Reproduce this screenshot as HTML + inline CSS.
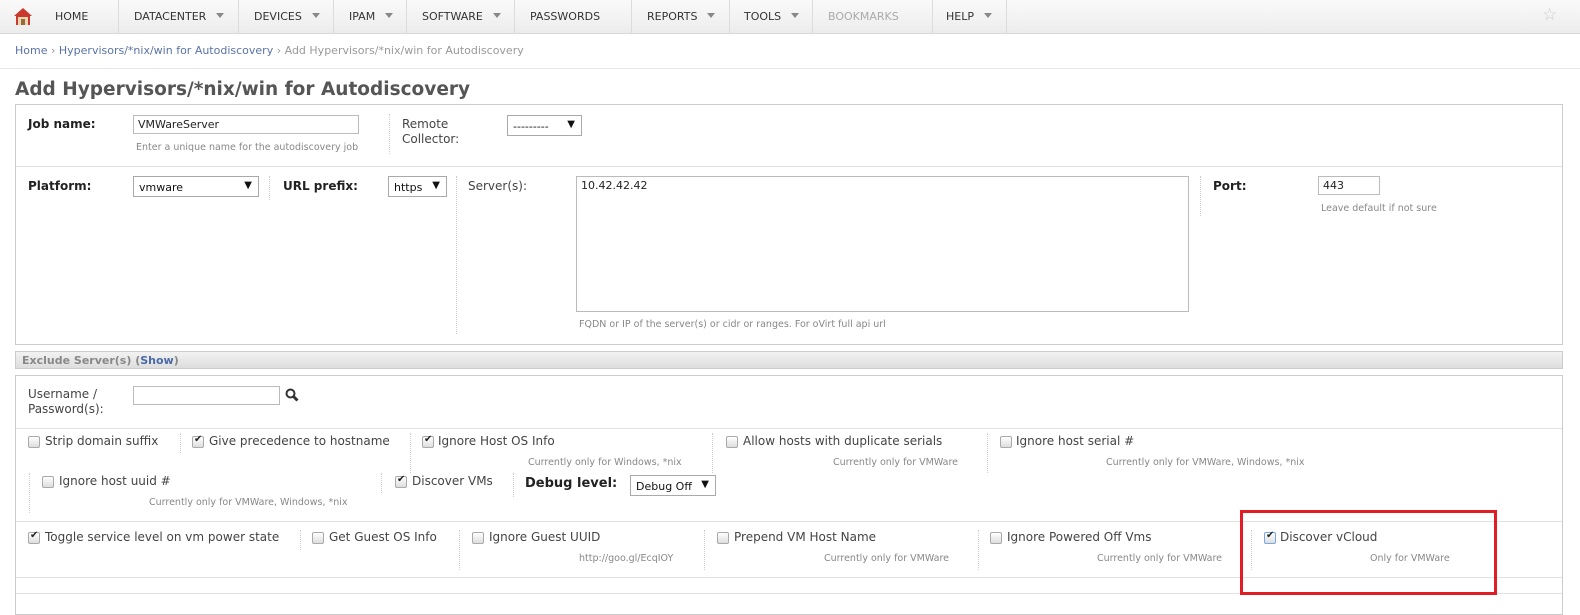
<!DOCTYPE html>
<html><head><meta charset="utf-8"><style>
*{margin:0;padding:0;box-sizing:border-box}
body{width:1580px;height:609px;overflow:hidden;background:#fff;font-family:"DejaVu Sans","Liberation Sans",sans-serif;font-size:12px;color:#444;position:relative}
.a{position:absolute;white-space:nowrap}
.nav{position:absolute;left:0;top:0;width:1580px;height:34px;background:linear-gradient(#fafafa,#ececec);border-bottom:1px solid #d8d8d8}
.ni{position:absolute;top:10px;font-size:11px;color:#333}
.sep{position:absolute;top:0;width:1px;height:34px;background:#dcdcdc}
.car{display:inline-block;margin-left:10px;border-left:4px solid transparent;border-right:4px solid transparent;border-top:5px solid #888;vertical-align:2px}
.box{position:absolute;border:1px solid #ccc}
.hl{position:absolute;height:1px;background:#e2e2e2}
.vd{position:absolute;width:0;border-left:1px dotted #ccc}
.in{position:absolute;border:1px solid #bbb;background:#fff;height:19px;font-size:11px;padding:2px 4px;color:#222}
.sel{position:absolute;border:1px solid #aaa;background:#fff;height:21px;font-size:11px;padding:4px 5px;color:#111}
.sel b{position:absolute;right:6px;top:3px;font-size:10px}
.lb{font-weight:bold;color:#222;font-size:12px}
.sm{font-size:9.5px;color:#888}
.cb{position:absolute;width:12px;height:12px;border:1px solid #aaa;border-radius:2px;background:linear-gradient(#fff,#ddd)}
.cb.c::after{content:"✔";position:absolute;left:1px;top:-3px;font-size:10px;color:#222}
.t{font-size:12px;color:#444}
</style></head><body>
<div class="nav">
<svg style="position:absolute;left:13px;top:7px" width="20" height="19" viewBox="0 0 20 19"><path d="M10 1 L1 9 L3 9 L3 18 L17 18 L17 9 L19 9 Z" fill="#c8382c"/><rect x="5" y="10" width="10" height="8" fill="#e9d6b2"/><rect x="8" y="12" width="4" height="6" fill="#9a6b3a"/></svg>
<div class="ni" style="left:55px">HOME</div>
<div class="sep" style="left:118px"></div>
<div class="ni" style="left:134px">DATACENTER<span class="car"></span></div>
<div class="sep" style="left:238px"></div>
<div class="ni" style="left:254px">DEVICES<span class="car"></span></div>
<div class="sep" style="left:333px"></div>
<div class="ni" style="left:349px">IPAM<span class="car"></span></div>
<div class="sep" style="left:406px"></div>
<div class="ni" style="left:422px">SOFTWARE<span class="car"></span></div>
<div class="sep" style="left:514px"></div>
<div class="ni" style="left:530px">PASSWORDS</div>
<div class="sep" style="left:631px"></div>
<div class="ni" style="left:647px">REPORTS<span class="car"></span></div>
<div class="sep" style="left:729px"></div>
<div class="ni" style="left:744px">TOOLS<span class="car"></span></div>
<div class="sep" style="left:812px"></div>
<div class="ni" style="left:828px;color:#aaa">BOOKMARKS</div>
<div class="sep" style="left:932px"></div>
<div class="ni" style="left:946px">HELP<span class="car"></span></div>
<div class="sep" style="left:1006px"></div>
<div class="a" style="left:1542px;top:5px;font-size:17px;color:#ccc">☆</div>
</div>
<div class="a" style="left:15px;top:44px;font-size:11px;color:#5a73a8">Home <span style="color:#999">›</span> Hypervisors/*nix/win for Autodiscovery <span style="color:#999">› Add Hypervisors/*nix/win for Autodiscovery</span></div>
<div class="hl" style="left:0;top:68px;width:1580px;background:#e6e6e6"></div>
<div class="a" style="left:15px;top:79px;font-size:18.5px;font-weight:bold;color:#555">Add Hypervisors/*nix/win for Autodiscovery</div>

<div class="box" style="left:15px;top:104px;width:1548px;height:241px"></div>
<div class="a lb" style="left:28px;top:117px">Job name:</div>
<div class="in" style="left:133px;top:115px;width:226px">VMWareServer</div>
<div class="a sm" style="left:136px;top:142px">Enter a unique name for the autodiscovery job</div>
<div class="vd" style="left:389px;top:114px;height:40px"></div>
<div class="a t" style="left:402px;top:117px;line-height:15px">Remote<br>Collector:</div>
<div class="sel" style="left:507px;top:115px;width:75px">---------<b>▼</b></div>
<div class="hl" style="left:16px;top:166px;width:1546px"></div>
<div class="a lb" style="left:28px;top:179px">Platform:</div>
<div class="sel" style="left:133px;top:176px;width:126px">vmware<b>▼</b></div>
<div class="vd" style="left:269px;top:176px;height:24px"></div>
<div class="a lb" style="left:283px;top:179px">URL prefix:</div>
<div class="sel" style="left:388px;top:176px;width:59px">https<b>▼</b></div>
<div class="vd" style="left:456px;top:176px;height:158px"></div>
<div class="a t" style="left:468px;top:179px">Server(s):</div>
<div class="in" style="left:576px;top:176px;width:613px;height:136px">10.42.42.42</div>
<div class="a sm" style="left:579px;top:319px">FQDN or IP of the server(s) or cidr or ranges. For oVirt full api url</div>
<div class="vd" style="left:1200px;top:176px;height:40px"></div>
<div class="a lb" style="left:1213px;top:179px">Port:</div>
<div class="in" style="left:1318px;top:176px;width:62px">443</div>
<div class="a sm" style="left:1321px;top:203px">Leave default if not sure</div>

<div class="a" style="left:15px;top:351px;width:1548px;height:18px;background:linear-gradient(#f2f2f2,#dedede);border:1px solid #ccc;font-size:11px;font-weight:bold;color:#888;padding:2px 6px">Exclude Server(s) (<span style="color:#4a6aa8">Show</span>)</div>

<div class="box" style="left:15px;top:375px;width:1548px;height:240px"></div>
<div class="a t" style="left:28px;top:387px;line-height:15px">Username /<br>Password(s):</div>
<div class="in" style="left:133px;top:386px;width:147px"></div>
<svg class="a" style="left:285px;top:388px" width="14" height="14" viewBox="0 0 14 14"><circle cx="5.5" cy="5.5" r="4" fill="none" stroke="#333" stroke-width="2"/><path d="M8.5 8.5 L12.5 12.5" stroke="#333" stroke-width="3"/></svg>
<div class="hl" style="left:16px;top:428px;width:1546px"></div>

<div class="cb" style="left:28px;top:436px"></div><div class="a t" style="left:45px;top:434px">Strip domain suffix</div>
<div class="vd" style="left:180px;top:433px;height:20px"></div>
<div class="cb c" style="left:192px;top:436px"></div><div class="a t" style="left:209px;top:434px">Give precedence to hostname</div>
<div class="vd" style="left:410px;top:433px;height:40px"></div>
<div class="cb c" style="left:422px;top:436px"></div><div class="a t" style="left:438px;top:434px">Ignore Host OS Info</div>
<div class="a sm" style="left:528px;top:457px">Currently only for Windows, *nix</div>
<div class="vd" style="left:712px;top:433px;height:40px"></div>
<div class="cb" style="left:726px;top:436px"></div><div class="a t" style="left:743px;top:434px">Allow hosts with duplicate serials</div>
<div class="a sm" style="left:833px;top:457px">Currently only for VMWare</div>
<div class="vd" style="left:987px;top:433px;height:40px"></div>
<div class="cb" style="left:1000px;top:436px"></div><div class="a t" style="left:1016px;top:434px">Ignore host serial #</div>
<div class="a sm" style="left:1106px;top:457px">Currently only for VMWare, Windows, *nix</div>

<div class="vd" style="left:29px;top:473px;height:40px"></div>
<div class="cb" style="left:42px;top:476px"></div><div class="a t" style="left:59px;top:474px">Ignore host uuid #</div>
<div class="a sm" style="left:149px;top:497px">Currently only for VMWare, Windows, *nix</div>
<div class="vd" style="left:381px;top:473px;height:20px"></div>
<div class="cb c" style="left:395px;top:476px"></div><div class="a t" style="left:412px;top:474px">Discover VMs</div>
<div class="vd" style="left:513px;top:473px;height:24px"></div>
<div class="a lb" style="left:525px;top:476px;font-size:13px">Debug level:</div>
<div class="sel" style="left:630px;top:475px;width:86px">Debug Off<b>▼</b></div>
<div class="hl" style="left:16px;top:521px;width:1546px"></div>

<div class="cb c" style="left:28px;top:532px"></div><div class="a t" style="left:45px;top:530px">Toggle service level on vm power state</div>
<div class="vd" style="left:300px;top:530px;height:20px"></div>
<div class="cb" style="left:312px;top:532px"></div><div class="a t" style="left:329px;top:530px">Get Guest OS Info</div>
<div class="vd" style="left:459px;top:530px;height:40px"></div>
<div class="cb" style="left:472px;top:532px"></div><div class="a t" style="left:489px;top:530px">Ignore Guest UUID</div>
<div class="a sm" style="left:579px;top:553px">http://goo.gl/EcqIOY</div>
<div class="vd" style="left:704px;top:530px;height:40px"></div>
<div class="cb" style="left:717px;top:532px"></div><div class="a t" style="left:734px;top:530px">Prepend VM Host Name</div>
<div class="a sm" style="left:824px;top:553px">Currently only for VMWare</div>
<div class="vd" style="left:978px;top:530px;height:40px"></div>
<div class="cb" style="left:990px;top:532px"></div><div class="a t" style="left:1007px;top:530px">Ignore Powered Off Vms</div>
<div class="a sm" style="left:1097px;top:553px">Currently only for VMWare</div>
<div class="vd" style="left:1251px;top:530px;height:40px"></div>
<div class="cb c" style="left:1264px;top:532px;border-color:#7aa7e0"></div><div class="a t" style="left:1280px;top:530px">Discover vCloud</div>
<div class="a sm" style="left:1370px;top:553px">Only for VMWare</div>
<div class="hl" style="left:16px;top:577px;width:1546px"></div>
<div class="hl" style="left:16px;top:593px;width:1546px"></div>
<div class="a" style="left:1240px;top:510px;width:257px;height:85px;border:3px solid #e21c24"></div>
</body></html>
